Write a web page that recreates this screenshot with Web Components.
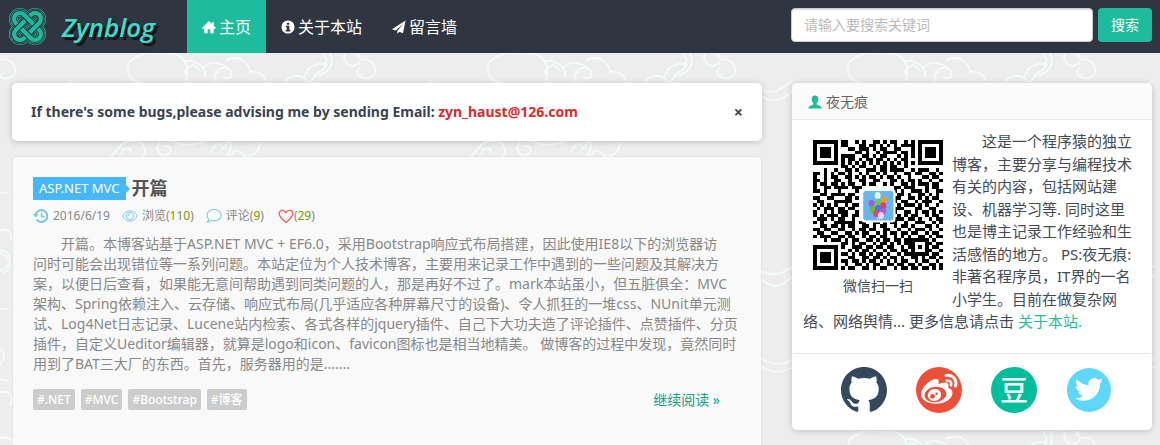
<!DOCTYPE html>
<html lang="zh-CN">
<head>
<meta charset="utf-8">
<title>Zynblog</title>
<meta name="viewport" content="width=device-width, initial-scale=1">
<style>
html{background:#ededed}
body{margin:0;font-family:"Noto Sans","Noto Sans CJK SC",sans-serif;font-size:14px;line-height:20px;color:#333}
</style>
</head>
<body>
<blog-page>
  <blog-nav slot="nav">
    <nav-item icon="home" href="#home" active>主页</nav-item>
    <nav-item icon="info" href="#about">关于本站</nav-item>
    <nav-item icon="plane" href="#wall">留言墙</nav-item>
  </blog-nav>
  <notice-bar>If there's some bugs,please advising me by sending Email: <a slot="mail" href="mailto:zyn_haust@126.com">zyn_haust@126.com</a></notice-bar>
  <post-card>
    <span slot="category">ASP.NET MVC</span>
    <span slot="title">开篇</span>
    <span slot="date">2016/6/19</span>
    <span slot="views">110</span>
    <span slot="comments">9</span>
    <span slot="likes">29</span>
    开篇。本博客站基于ASP.NET MVC + EF6.0，采用Bootstrap响应式布局搭建，因此使用IE8以下的浏览器访<br>问时可能会出现错位等一系列问题。本站定位为个人技术博客，主要用来记录工作中遇到的一些问题及其解决方<br>案，以便日后查看，如果能无意间帮助遇到同类问题的人，那是再好不过了。mark本站虽小，但五脏俱全：MVC<br>架构、Spring依赖注入、云存储、响应式布局(几乎适应各种屏幕尺寸的设备)、令人抓狂的一堆css、NUnit单元测<br>试、Log4Net日志记录、Lucene站内检索、各式各样的jquery插件、自己下大功夫造了评论插件、点赞插件、分页<br>插件，自定义Ueditor编辑器，就算是logo和icon、favicon图标也是相当地精美。 做博客的过程中发现，竟然同时<br>用到了BAT三大厂的东西。首先，服务器用的是.......
    <post-tag slot="tags">#.NET</post-tag>
    <post-tag slot="tags">#MVC</post-tag>
    <post-tag slot="tags">#Bootstrap</post-tag>
    <post-tag slot="tags">#博客</post-tag>
  </post-card>
  <author-card slot="aside">
    <span slot="name">夜无痕</span>
    这是一个程序猿的独立<br>博客，主要分享与编程技术<br>有关的内容，包括网站建<br>设、机器学习等. 同时这里<br>也是博主记录工作经验和生<br>活感悟的地方。 PS:夜无痕:<br>非著名程序员，IT界的一名<br>小学生。目前在做复杂网<br>络、网络舆情... 更多信息请点击
  </author-card>
</blog-page>

<script>
const define = (name, html, setup) => customElements.define(name, class extends HTMLElement {
  connectedCallback() {
    if (this.shadowRoot) return;
    const t = document.createElement('template');
    t.innerHTML = html;
    const root = this.attachShadow({mode: 'open'});
    root.append(t.content.cloneNode(true));
    if (setup) setup(this, root);
  }
});

const ICONS = {
  home: ['0 0 16 16', '<path fill="currentColor" d="M8 1 0 9l1 1h1.500v5H6.500v-4.500h3V15h4v-5H15l1-1-2.500-2.500V2.500h-2v2z"/>'],
  info: ['0 0 16 16', '<path fill="currentColor" fill-rule="evenodd" d="M8 .5a7.500 7.500 0 1 0 0 15 7.500 7.500 0 0 0 0-15zM6.700 3h2.800v2.300H6.700zM5.500 6.500h4v4.700h1.200V13H5.300v-1.800h1.300V8.200H5.500z"/>'],
  plane: ['0 0 16 16', '<path fill="currentColor" d="M15.500.5 0 10.500l4.200 1.400L13 4.200 6 12.700v3l2.300-2.400 4.200 1.700z"/>'],
  user: ['0 0 16 16', '<path fill="currentColor" d="M8 .5C5.500.5 4.200 2.300 4.200 4.700c0 1.800.8 3.800 1.900 4.800v1.300C4.500 12 .5 12.200.3 15.500h15.400c-.2-3.300-4.200-3.500-5.800-4.700V9.500c1.100-1 1.900-3 1.900-4.800C11.800 2.300 10.500.5 8 .5z"/>'],
  clock: ['0 0 16 16', '<g fill="none" stroke="#6cc4e6" stroke-width="1.800"><path d="M2.500 7a6 6 0 1 1 1 4.500"/><path d="M8.500 4.500v4h3.200" stroke-width="1.400"/></g><path fill="#6cc4e6" d="M0 6h5.400L2.700 9.500z"/>'],
  eye: ['0 0 16 16', '<g fill="none" stroke="#7fcbe8"><path d="M.6 8C2.500 4.500 5 2.800 8 2.800S13.500 4.500 15.400 8C13.500 11.500 11 13.200 8 13.200S2.500 11.500.6 8z"/><circle cx="8" cy="8" r="3.600"/><path d="M6.200 8a1.800 1.800 0 0 1 1.800-1.800"/></g>'],
  bubble: ['0 0 16 16', '<path fill="none" stroke="#7fcbe8" stroke-width="1.100" d="M8.200 1.500c4 0 7 2.500 7 5.700s-3 5.700-7 5.700c-1.200 0-2.300-.2-3.200-.6-.8.900-2 1.700-3.600 1.800.8-.9 1.200-2 1.100-3.200C1.500 9.900 1 8.600 1 7.200c0-3.200 3.200-5.700 7.200-5.700z"/>'],
  heart: ['0 0 16 16', '<path fill="none" stroke="#e8604f" stroke-width="1.300" d="M8 14.500C4 11.200 1.200 9 1.200 5.800c0-2 1.400-3.500 3.300-3.500C6 2.300 7.300 3.200 8 4.600c.7-1.400 2-2.300 3.500-2.300 1.900 0 3.300 1.500 3.300 3.500 0 3.200-2.800 5.400-6.800 8.700z"/>'],
  github: ['0 0 16 16', '<path fill="#34495e" d="M8 0C3.580 0 0 3.580 0 8c0 3.540 2.290 6.530 5.470 7.590.4.07.55-.17.55-.38 0-.19-.01-.82-.01-1.490-2.010.37-2.530-.49-2.690-.94-.09-.23-.48-.94-.82-1.130-.28-.15-.68-.52-.01-.53.63-.01 1.080.58 1.230.82.72 1.210 1.870.87 2.330.66.07-.52.28-.87.51-1.070-1.780-.2-3.640-.89-3.640-3.950 0-.87.31-1.590.82-2.150-.08-.2-.36-1.020.08-2.120 0 0 .67-.21 2.200.82.64-.18 1.320-.27 2-.27.68 0 1.360.09 2 .27 1.530-1.040 2.200-.82 2.200-.82.44 1.100.16 1.920.08 2.120.51.56.82 1.270.82 2.150 0 3.070-1.870 3.750-3.650 3.950.29.25.54.73.54 1.480 0 1.070-.01 1.930-.01 2.200 0 .21.15.46.55.38A8.013 8.013 0 0 0 16 8c0-4.420-3.580-8-8-8z"/>'],
  weibo: ['0 0 46 46', '<circle cx="23" cy="23" r="23" fill="#ec5038"/><path fill="#fff" d="M22.500 15.500c.8-2-.3-4-3-3.500C12.500 13.200 5 21.500 5 27c0 6 7 9.800 15 9.800 9.500 0 16.500-5.300 16.500-10.800 0-3-2-4.500-4.300-5.200.8-2.600.3-4.800-2.300-5.200-2.200-.4-5 .5-7.400 1.300z"/><ellipse cx="19.500" cy="27.500" rx="11" ry="7.700" fill="#ec5038" transform="rotate(-6 19.500 27.500)"/><ellipse cx="18.500" cy="28" rx="6.800" ry="6" fill="#fff" transform="rotate(-18 18.500 28)"/><circle cx="16.500" cy="29.300" r="2.400" fill="#ec5038"/><circle cx="20.600" cy="26.800" r="1.200" fill="#ec5038"/><g fill="none" stroke="#fff" stroke-linecap="round"><path stroke-width="3" d="M30 8.500c6-1.500 11.500 4 9.500 10.500"/><path stroke-width="2.600" d="M30.800 13.600c3-.6 5.200 1.800 4.300 4.700"/></g>'],
  twitter: ['0 0 46 46', '<circle cx="23" cy="23" r="22" fill="#5ed7fb"/><path fill="#fff" transform="translate(9 8.500) scale(1.160)" d="M23.953 4.570a10 10 0 0 1-2.825.775 4.958 4.958 0 0 0 2.163-2.723c-.951.555-2.005.959-3.127 1.184a4.920 4.920 0 0 0-8.384 4.482C7.690 8.095 4.067 6.130 1.640 3.162a4.822 4.822 0 0 0-.666 2.475c0 1.710.87 3.213 2.188 4.096a4.904 4.904 0 0 1-2.228-.616v.06a4.923 4.923 0 0 0 3.946 4.827 4.996 4.996 0 0 1-2.212.085 4.936 4.936 0 0 0 4.604 3.417 9.867 9.867 0 0 1-6.102 2.105c-.39 0-.779-.023-1.170-.067a13.995 13.995 0 0 0 7.557 2.209c9.053 0 13.998-7.496 13.998-13.985 0-.21 0-.42-.015-.63A9.935 9.935 0 0 0 24 4.590z"/>'],
  knot: ['-20 -20 40 40', `<g transform="rotate(45)" fill="none">
    <defs><rect id="h" x="-17" y="-6" width="34" height="12" rx="6"/><rect id="v" x="-6" y="-17" width="12" height="34" rx="6"/></defs>
    <g stroke="#1dbc9c" stroke-width="10.500"><use href="#h"/><use href="#v"/></g>
    <g stroke="#303641" stroke-width="9.200"><use href="#h"/><use href="#v"/></g>
    <g stroke="#1dbc9c" stroke-width="7.400"><use href="#h"/><use href="#v"/></g>
    <g stroke="#303641" stroke-width="6.200"><use href="#h"/><use href="#v"/></g>
    <use href="#h" stroke="#1dbc9c" stroke-width="4.200"/>
    <use href="#v" stroke="#303641" stroke-width="6.600"/><use href="#v" stroke="#1dbc9c" stroke-width="4.200"/>
    <g stroke="#303641" stroke-width="6.600"><path d="M1 6H10M-1-6H-10"/></g>
    <g stroke="#1dbc9c" stroke-width="4.200"><path d="M0 6H11M0-6H-11"/></g></g>`]
};

define('app-icon', '<style>:host{display:block;flex:none;width:16px;height:16px}svg{display:block;width:100%;height:100%}</style>', (el, root) => {
  const [box, body] = ICONS[el.getAttribute('name')];
  root.innerHTML += `<svg viewBox="${box}" aria-hidden="true">${body}</svg>`;
});

define('blog-page', `<style>
  :host{display:block;min-height:100vh;background-color:#ededed;background-position:0 53px;
    background-image:url("data:image/svg+xml,%3Csvg xmlns='http://www.w3.org/2000/svg' width='360' height='378' fill='none' stroke='%23f4fafa' stroke-width='2' stroke-linecap='round'%3E%3Cpath d='M0 7c8-3 16 3 15 11s-12 10-15 4M163 1c-20-5-38 6-35 17 1 8 8 12 15 12M166 1c18-3 24 12 20 26M186 8c9-2 20 6 19 15M185 21c0-9 12-12 14-4M203 15c6-8 20-5 24 0M216 28c-4-9 6-17 14-11 5 5-2 11-6 7M227 7c14-6 24 6 23 12 7-1 14 2 15 8M285 28c8-8 18-6 22 0M305 23c2-10 12-14 22-11M322 0c6 4 6 15-3 19-6 2-4 9-10 10M330 0c5 12-2 20-11 22M345 2c-3 7 4 13 11 10s5-10 0-9M356 2c12-4 20 8 19 14-1 9-16 12-18 3 2-6 8-5 9-1M40 37c14 5 20 0 32-9M40 42c10 8 20 8 32-4M111 104c8-10 12-18 25-16 10 2 11 12 6 16M122 100c0-6 8-6 9-2M160 89c-6 8 0 15 7 13 6-3 3-10-2-9M172 88c12 6 22 4 35 0M212 98c4-8 10-10 10-2l8-8c2 6 0 12-4 15M230 103c4-8 12-5 14 0 12 2 14-7 16-12M0 140h8M0 178c8-4 13 2 11 9M0 200c10 4 14 14 4 20M0 218c14-4 12-22 0-20M40 218c14 6 22 3 34-5M40 226c15 12 22 7 34-4M0 256h8M0 296c8 5 3 14-3 16M40 305c14 8 24 8 34 0M40 313c16 10 24 5 34 1M0 340c10-5 14 6 10 12M0 326l8 2M130 378c-4-8 30-16 36-5M188 372c14-4 20 6 20 6M330 370c10 4 9 10 8 12'/%3E%3C/svg%3E")}
  main{display:grid;grid-template-columns:25fr 12fr;gap:30px;align-items:start;padding:30px 8px 0 12px}
  .posts{display:flex;flex-direction:column;gap:16px}
  </style><slot name="nav"></slot><main><div class="posts"><slot></slot></div><slot name="aside"></slot></main>`);

define('blog-nav', `<style>
  :host{display:block;background:#303641}
  header{display:flex;align-items:center;height:53px;padding:0 8px}
  .brand{display:flex;align-items:center;gap:15px;width:179px;text-decoration:none;color:#3fdcc8;
    font:italic 600 26px/34px "Open Sans","Noto Sans",sans-serif;text-shadow:3px 3px 1px #0c1218}
  .brand app-icon{width:39px;height:39px}
  nav{display:flex;flex:1;height:100%}
  form{display:flex;gap:5px;height:34px;padding-bottom:4px}
  input{box-sizing:border-box;width:302px;height:34px;padding:0 12px;border:1px solid #ccc;border-radius:4px;background:#fff;
    font:inherit;box-shadow:inset 0 1px 1px #0002}
  input::placeholder{color:#bbb;opacity:1}
  button{width:54px;height:34px;padding:0;border:0;border-radius:4px;background:#1dbc9c;color:#fff;font:inherit}
  </style><header><a class="brand" href="#home"><app-icon name="knot"></app-icon>Zynblog</a><nav><slot></slot></nav>
  <form><input type="search" aria-label="搜索" placeholder="请输入要搜索关键词"><button type="button">搜索</button></form></header>`);

define('nav-item', `<style>
  :host{display:block;height:100%;font-size:16px}
  :host([active]){background:#1dbc9c}
  a{display:flex;align-items:center;gap:3px;height:100%;padding:0 15px;color:#fff;text-decoration:none}
  app-icon{width:14px;height:14px}
  </style><a><span><slot></slot></span></a>`, (el, root) => {
  const link = root.querySelector('a');
  link.href = el.getAttribute('href');
  const icon = document.createElement('app-icon');
  icon.setAttribute('name', el.getAttribute('icon'));
  link.prepend(icon);
});

define('notice-bar', `<style>
  :host{display:flex;align-items:center;justify-content:space-between;padding:19px;border-radius:5px;background:#fff;
    box-shadow:0 1px 6px #0003;color:#3b4350;font-weight:700}
  ::slotted(a){color:#d92b2b;text-decoration:none}
  button{border:0;background:none;padding:0;color:#3b4350;font:inherit;font-size:16px;line-height:20px}
  </style><span><slot></slot><slot name="mail"></slot></span><button type="button" aria-label="关闭">×</button>`);

define('post-card', `<style>
  :host{display:block;margin:0 1px;padding:20px 20px 40px;border-radius:3px;background:#f9f9f9;box-shadow:0 0 2px #0002;color:#888}
  header{display:flex;align-items:center;gap:6px;height:23px}
  .cat{position:relative;padding:0 6px;background:#46b8fa;color:#fff;font-size:13px;line-height:23px;text-decoration:none}
  .cat::after{content:"";position:absolute;left:100%;top:8px;border:4px solid transparent;border-right:0;border-left-color:#46b8fa}
  h2{margin:0;font-size:18px;line-height:23px;color:#555}
  h2 a{color:inherit;text-decoration:none}
  .meta{display:flex;gap:12px;margin-top:6px;font-size:12px;line-height:20px}
  .meta span{display:flex;align-items:center;gap:4px}
  .meta .like{gap:0;margin-left:2px}
  .meta b{font-weight:400;display:block}
  ::slotted([slot=views]),::slotted([slot=comments]),::slotted([slot=likes]){color:#7a9a00}
  p{margin:8px 0 15px;text-indent:28px;line-height:20px}
  footer{display:flex;align-items:center;gap:6px}
  .more{margin-left:auto;padding-right:21px;color:#16a085;text-decoration:none}
  </style>
  <header><a class="cat" href="#category"><slot name="category"></slot></a><h2><a href="#post"><slot name="title"></slot></a></h2></header>
  <div class="meta"><span><app-icon name="clock"></app-icon><slot name="date"></slot></span>
  <span><app-icon name="eye"></app-icon><b>浏览(<slot name="views"></slot>)</b></span>
  <span><app-icon name="bubble"></app-icon><b>评论(<slot name="comments"></slot>)</b></span>
  <span class="like"><app-icon name="heart"></app-icon><b>(<slot name="likes"></slot>)</b></span></div>
  <p><slot></slot></p>
  <footer><slot name="tags"></slot><a class="more" href="#post">继续阅读 »</a></footer>`);

define('post-tag', `<style>:host{display:block}a{display:block;padding:0 4px;border-radius:2px;background:#ccc;color:#fff;font-size:12px;font-weight:500;line-height:21px;text-decoration:none}</style><a href="#tag"><slot></slot></a>`);

const MODULES = [
'1111111011001010011010110010101111111',
'1000001011000110110101010111101000001',
'1011101000110111010110011000101011101',
'1011101000001101001011110110101011101',
'1011101011110011010110001010101011101',
'1000001010110101101101010110001000001',
'1111111010101010101010101010101111111',
'0000000011010110010110110010000000000',
'0001001001101001110110111100101110010',
'1101010110100101001010010011011001101',
'1001011001101010110101101001000110110',
'1101001100100110011000110101101001001',
'1011011010110010110010100110101110110',
'1001101111011100000000011011100010110',
'1101000100001000000000010100111010011',
'0011011110110000000000001101001101010',
'1100110001101000000000011001101010110',
'0110001111100000000000010110010111001',
'1010101001011000000000001011101010010',
'0101110110110000000000011100011001100',
'1001010111001000000000010011010110101',
'1010111011011000000000001010110010110',
'0111010110010000000000011101101001011',
'1010001111110110011010110010011100101',
'0011011010110011010110010110100011010',
'1101100110010110110011001001011101001',
'0110011001101011001010110110110010110',
'1011100110110010110110010101001101011',
'0001011101011001101011011011111110100',
'0000000011010110010110101011100011011',
'1111111010011101101101100101101010110',
'1000001000101011010010110110100011001',
'1011101011010110101101001011111110110',
'1011101000110011011010110100110101101',
'1011101011011010110101010110010110010',
'1000001001001101011001101101101001101',
'1111111010110011010110010110110110101'];

define('qr-code', `<style>:host{display:block;width:130px;height:130px}svg{display:block;width:100%;height:100%}</style>`, (el, root) => {
  let d = '';
  MODULES.forEach((row, y) => [...row].forEach((c, x) => { if (c === '1') d += `M${x} ${y}h1v1h-1z`; }));
  const balloons = [[18.4,15.8,'#e3f5fc'],[20.2,17,'#f39a2c'],[16.7,18,'#9c62c9'],[18.5,17.7,'#68c65b'],[20,18.700,'#e63a68'],[17,19.800,'#68b933'],[18.500,19.500,'#5570cf'],[20,20.300,'#b95acc'],[18,21,'#e84072'],[19.300,21.500,'#f0d8ee']]
    .map(([x, y, c]) => `<ellipse cx="${x}" cy="${y}" rx=".85" ry="1" fill="${c}"/>`).join('');
  root.innerHTML += `<svg viewBox="0 0 37 37" role="img" aria-label="微信二维码"><path d="${d}" shape-rendering="crispEdges"/>
    <rect x="13.700" y="13.900" width="9.800" height="9.600" rx="1" fill="#fff"/><rect x="14.300" y="14.500" width="8.600" height="8.400" rx=".7" fill="#68b6ee"/>${balloons}<path d="M18.300 22v.8M19 22.300l-.3.5" stroke="#eef" stroke-width=".2"/></svg>`;
});

define('author-card', `<style>
  :host{display:block;border-radius:5px;background:#fff;box-shadow:0 1px 6px #0003}
  h3{display:flex;align-items:center;gap:4px;margin:0;padding:0 16px;border-bottom:1px solid #e8e8e8;border-radius:5px 5px 0 0;
    background:#fbfbfb;font-size:14px;font-weight:400;padding-top:2px;height:34px;line-height:34px;color:#666}
  h3 app-icon{width:14px;height:14px;color:#1dbc9c}
  .bio{display:flow-root;padding:10px 11px 20px;font-size:15px;line-height:1.5;color:#444b55}
  figure{float:left;width:130px;margin:10px 9px 0 10px}
  figcaption{font-size:14px;line-height:20px;padding-top:6px;text-align:center}
  p{margin:0;text-indent:30px}
  p a{color:#1dbc9c;text-decoration:none}
  .social{display:flex;justify-content:center;gap:29px;margin:0 1px;padding:13px 0 17px 9px;border-top:1px solid #e8e8e8}
  .social a{display:block;width:46px;height:46px;border-radius:50%}
  .social app-icon{width:46px;height:46px}
  .douban{background:#00bd9c;color:#fff;font:500 28px/44px "Noto Sans CJK SC",sans-serif;text-align:center;text-decoration:none}
  </style>
  <h3><app-icon name="user"></app-icon><slot name="name"></slot></h3>
  <div class="bio"><figure><qr-code></qr-code><figcaption>微信扫一扫</figcaption></figure><p><slot></slot><a href="#about">关于本站.</a></p></div>
  <div class="social"><a href="#github" aria-label="GitHub"><app-icon name="github"></app-icon></a><a href="#weibo" aria-label="微博"><app-icon name="weibo"></app-icon></a><a class="douban" href="#douban">豆</a><a href="#twitter" aria-label="Twitter"><app-icon name="twitter"></app-icon></a></div>`);
</script>
</body>
</html>
